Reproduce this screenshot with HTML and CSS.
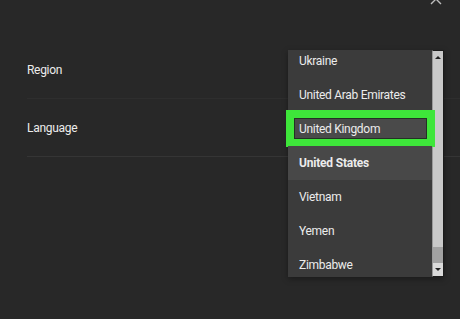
FILE: index.html
```html
<!DOCTYPE html>
<html lang="en">

<head>
  <meta charset="UTF-8">
  <meta name="viewport" content="width=device-width, initial-scale=1.0">
  <title>Settings</title>
  <link rel="stylesheet" href="styles.css">
</head>

<body>
  <div class="dialog">
    <button class="close-btn" aria-label="Close">
      <svg width="12" height="12" viewBox="0 0 12 12">
        <path d="M1 1 L11 11 M11 1 L1 11" stroke="#bdbdbd" stroke-width="1.4" fill="none" />
      </svg>
    </button>

    <div class="settings">
      <div class="setting-row">Region</div>
      <div class="setting-row">Language</div>
    </div>

    <!-- region picker, open -->
    <div class="dropdown">
      <ul class="options">
        <li>Ukraine</li>
        <li>United Arab Emirates</li>
        <li class="marked">United Kingdom</li>
        <li class="selected">United States</li>
        <li>Vietnam</li>
        <li>Yemen</li>
        <li>Zimbabwe</li>
      </ul>
      <div class="scrollbar">
        <span class="arrow up"></span>
        <span class="track"></span>
        <span class="thumb"></span>
        <span class="arrow down"></span>
      </div>
      <div class="mark-box"></div>
    </div>
  </div>
</body>

</html>
```

FILE: styles.css
```css
:root {
  --bg-color: #282828;
  --menu-color: #3b3b3b;
  --menu-active: #484848;
  --text-color: #ececec;
  --line-color: #353535;
  --mark-color: #3ee63a;
}

* {
  margin: 0;
  padding: 0;
  box-sizing: border-box;
}

body {
  font-family: Roboto, 'Noto Sans', sans-serif;
  background-color: var(--bg-color);
  color: var(--text-color);
  width: 460px;
  height: 319px;
  overflow: hidden;
}

.dialog {
  position: relative;
  height: 100%;
  padding-top: 41px;
}

.close-btn {
  position: absolute;
  top: -7px;
  left: 430px;
  background: none;
  border: none;
  width: 12px;
  height: 12px;
}

.settings {
  padding-left: 27px;
}

.setting-row {
  height: 58px;
  display: flex;
  align-items: center;
  font-size: 12px;
  letter-spacing: -0.3px;
  border-bottom: 1px solid var(--line-color);
}

.setting-row:first-child {
  border-bottom-color: #2e2e2e;
}

.dropdown {
  position: absolute;
  top: 50px;
  left: 288px;
  width: 156px;
  height: 227px;
  display: flex;
  box-shadow: 0 2px 6px rgba(0, 0, 0, 0.35);
}

.options {
  list-style: none;
  flex: 1;
  background: var(--menu-color);
  overflow: hidden;
}

.options li {
  height: 34px;
  display: flex;
  align-items: center;
  padding-left: 11px;
  font-size: 12px;
  letter-spacing: -0.3px;
  position: relative;
  z-index: 2;
}

.options li:first-child {
  margin-top: -6px;
}

.options li.selected {
  background: var(--menu-active);
  font-weight: 700;
  letter-spacing: -0.2px;
}

/* green highlight drawn over the list */
.mark-box {
  position: absolute;
  left: -2px;
  top: 60px;
  width: 149px;
  height: 37px;
  border: 8px solid var(--mark-color);
  background: #4a4a4a;
  box-shadow: inset 0 0 0 1px #243124;
  z-index: 1;
}

.scrollbar {
  width: 12px;
  display: flex;
  flex-direction: column;
  background: #c9c9c9;
  border: 1px solid #1c1c1c;
  border-left-color: #9a9a9a;
}

.scrollbar .track {
  flex: 1;
}

.scrollbar .thumb {
  height: 16px;
  background: #a2a2a2;
}

.scrollbar .arrow {
  height: 13px;
  display: flex;
  align-items: center;
  justify-content: center;
}

.scrollbar .arrow::after {
  content: "";
  border-left: 3px solid transparent;
  border-right: 3px solid transparent;
}

.scrollbar .up::after {
  border-bottom: 3px solid #222;
}

.scrollbar .down {
  background: #dadada;
}

.scrollbar .down::after {
  border-top: 3px solid #222;
}
```
